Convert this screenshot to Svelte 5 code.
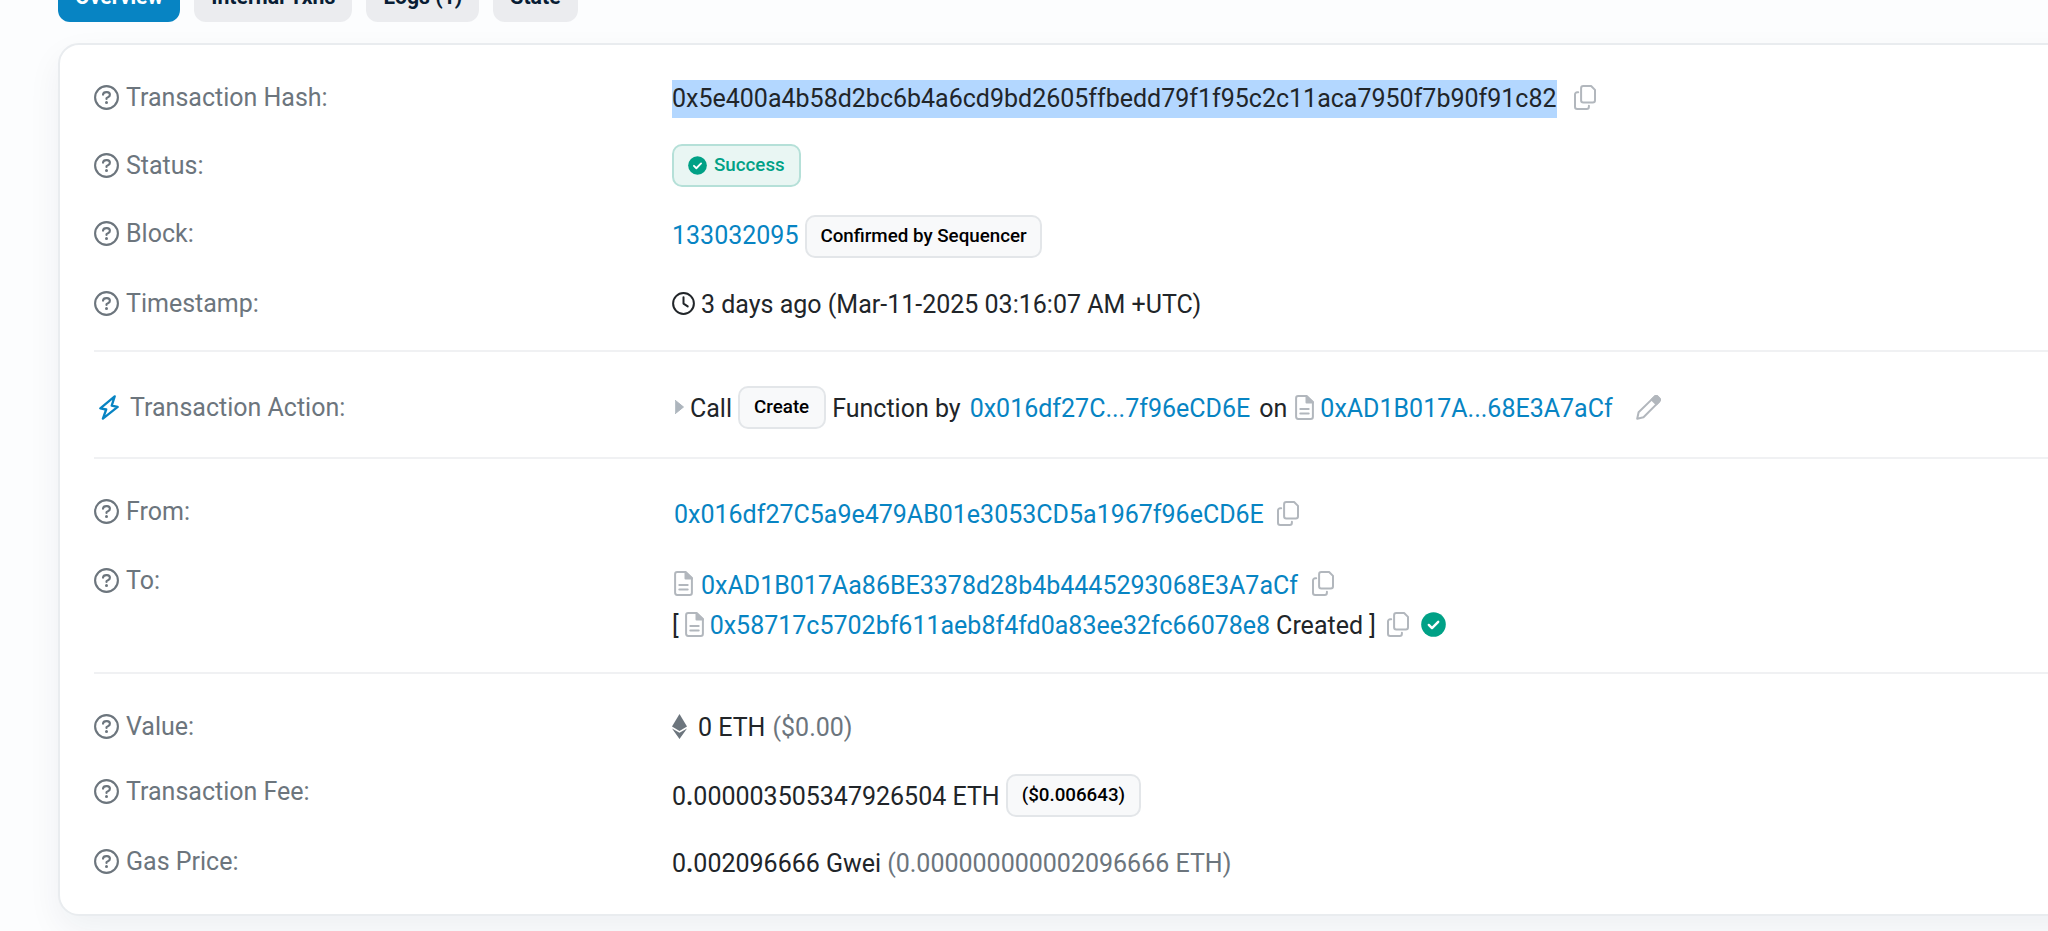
<script>
  const tabs = ["Overview", "Internal Txns", "Logs (1)", "State"];
  let active = $state("Overview");

  const tx = {
    hash: "0x5e400a4b58d2bc6b4a6cd9bd2605ffbedd79f1f95c2c11aca7950f7b90f91c82",
    block: "133032095",
    time: "3 days ago (Mar-11-2025 03:16:07 AM +UTC)",
    fromShort: "0x016df27C...7f96eCD6E",
    toShort: "0xAD1B017A...68E3A7aCf",
    from: "0x016df27C5a9e479AB01e3053CD5a1967f96eCD6E",
    to: "0xAD1B017Aa86BE3378d28b4b4445293068E3A7aCf",
    created: "0x58717c5702bf611aeb8f4fd0a83ee32fc66078e8"
  };
</script>

{#snippet label(text)}
  <div class="label">
    <svg class="help" viewBox="0 0 25 25" width="25" height="25">
      <circle cx="12.5" cy="12.5" r="11.4" />
      <path d="M9 9.600c.2-1.700 1.300-2.500 3.300-2.500h.7c1.800 0 2.900 1.100 2.900 2.600 0 1.200-.7 1.900-1.700 2.500l-1.700 1v.7" />
      <circle class="dot" cx="12.500" cy="17.400" r="1.500" />
    </svg>
    <span>{text}</span>
  </div>
{/snippet}

{#snippet copy()}
  <svg class="copy" viewBox="0 0 22 25" width="22" height="25">
    <path d="M9.300 1h7.800L21 4.900v10.400a2.200 2.200 0 0 1-2.200 2.200H9.300a2.200 2.200 0 0 1-2.200-2.200V3.200A2.200 2.200 0 0 1 9.300 1z" />
    <path d="M4.200 7.300H3.200A2.200 2.200 0 0 0 1 9.500v12.300A2.200 2.200 0 0 0 3.200 24h9.500a2.200 2.200 0 0 0 2.200-2.200v-1" />
  </svg>
{/snippet}

{#snippet doc()}
  <svg class="doc" viewBox="0 0 19 25" width="19" height="25">
    <path d="M3.200 1.100h8.600L17.900 7v14.700a2.200 2.200 0 0 1-2.200 2.200H3.200A2.200 2.200 0 0 1 1.100 21.700V3.300A2.200 2.200 0 0 1 3.200 1.100z" />
    <path class="fold" d="M11.500 1.100V7.400h6.400z" />
    <path d="M5.300 14.100h8.400M5.300 18.500h8.400" />
  </svg>
{/snippet}

{#snippet check(size)}
  <svg class="check" viewBox="0 0 25 25" width={size} height={size}>
    <circle cx="12.500" cy="12.500" r="12.300" />
    <path d="M7.800 12.900l3.200 3.200 6.200-6.300" />
  </svg>
{/snippet}

<div class="page">
  <nav>
    {#each tabs as tab}
      <button class:active={tab === active} onclick={() => (active = tab)}>{tab}</button>
    {/each}
  </nav>

  <div class="card">
    <section class="summary">
      {@render label("Transaction Hash:")}
      <div class="value hash">
        <span class="selected">{tx.hash}</span>
        {@render copy()}
      </div>

      {@render label("Status:")}
      <div class="value">
        <span class="badge success">{@render check(19)}<span>Success</span></span>
      </div>

      {@render label("Block:")}
      <div class="value block">
        <a href="#block">{tx.block}</a>
        <span class="badge low">Confirmed by Sequencer</span>
      </div>

      {@render label("Timestamp:")}
      <div class="value">
        <svg class="clock" viewBox="0 0 23 23" width="23" height="23">
          <circle cx="11.500" cy="11.500" r="10.400" />
          <path d="M11.500 5.300v6.300l4.200 2.800" />
        </svg>
        <span>{tx.time}</span>
      </div>
    </section>

    <section class="action">
      <div class="label">
        <svg class="bolt" viewBox="0 0 20 25" width="20" height="25">
          <path d="M15.700 1.400L1.300 13.300l5.900 1.200-3.300 9.200 14.800-11.800-6-1.200z" />
        </svg>
        <span>Transaction Action:</span>
      </div>
      <div class="value">
        <svg class="caret" viewBox="0 0 9 14" width="9" height="14">
          <path d="M.5.500L8.500 7l-8 6.500z" />
        </svg>
        <span>Call</span>
        <span class="badge create">Create</span>
        <span>Function by</span>
        <a class="fromShort" href="#from">{tx.fromShort}</a>
        <span class="on">on</span>
        {@render doc()}
        <a href="#to">{tx.toShort}</a>
        <svg class="pencil" viewBox="0 0 25 25" width="25" height="25">
          <path d="M1.200 23.800l1.400-6.500L18.400 1.900a2.500 2.500 0 0 1 3.500 0l1.200 1.200a2.500 2.500 0 0 1 0 3.500L7.500 22.200z" />
          <path class="tip" d="M15.600 4.600l2.800-2.700a2.500 2.500 0 0 1 3.500 0l1.200 1.200a2.500 2.500 0 0 1 0 3.500l-2.700 2.700z" />
        </svg>
      </div>
    </section>

    <section class="parties">
      {@render label("From:")}
      <div class="value from">
        <a href="#from">{tx.from}</a>
        {@render copy()}
      </div>

      {@render label("To:")}
      <div class="lines">
        <div class="value to">
          {@render doc()}
          <a href="#to">{tx.to}</a>
          {@render copy()}
        </div>
        <div class="value created">
          <span>[</span>
          {@render doc()}
          <a href="#created">{tx.created}</a>
          <span>Created ]</span>
          {@render copy()}
          {@render check(25)}
        </div>
      </div>
    </section>

    <section class="costs">
      {@render label("Value:")}
      <div class="value eth">
        <svg viewBox="0 0 15 25" width="15" height="25">
          <path d="M7.500 0L15 12.600l-7.500 4.500L0 12.600z" />
          <path d="M0 14.400l7.500 4.400 7.500-4.400L7.500 25z" />
        </svg>
        <span>0 ETH</span>
        <span class="muted">($0.00)</span>
      </div>

      {@render label("Transaction Fee:")}
      <div class="value">
        <span>0<b>.</b>000003505347926504 ETH</span>
        <span class="badge">($0.006643)</span>
      </div>

      {@render label("Gas Price:")}
      <div class="value">
        <span>0<b>.</b>002096666 Gwei</span>
        <span class="muted">(0.000000000002096666 ETH)</span>
      </div>
    </section>
  </div>
</div>

<style>
  :global(body) {
    background: #fcfdfe;
  }
  .page {
    height: 931px;
    overflow: hidden;
    padding-left: 58px;
    box-sizing: border-box;
    font-family: Roboto, "Liberation Sans", sans-serif;
    font-size: 25px;
    color: #212529;
    white-space: nowrap;
  }
  nav {
    display: flex;
    gap: 14px;
    height: 22px;
    align-items: flex-end;
  }
  button {
    height: 46px;
    padding: 0 17px 4px;
    border: 0;
    border-radius: 12px;
    background: #ebecef;
    color: #081d35;
    font: 700 21.25px/42px Roboto, "Liberation Sans", sans-serif;
  }
  button.active {
    background: #0784c3;
    color: #fff;
  }
  .card {
    width: 2060px;
    height: 873px;
    margin-top: 21px;
    box-sizing: border-box;
    padding-left: 34px;
    border: 2px solid #e9ecef;
    border-radius: 21px;
    background: #fff;
    box-shadow: 0 14px 34px rgba(18, 38, 63, 0.06);
  }
  section {
    display: grid;
    grid-template-columns: 578px 1fr;
    align-items: center;
    box-sizing: border-box;
    border-bottom: 2px solid #f0f1f3;
  }
  .summary {
    grid-template-rows: 68px 69px 69px 68px;
    padding: 18px 0 13px;
  }
  .action {
    grid-template-rows: 70px;
    padding: 20px 0 15px;
  }
  .parties {
    grid-template-rows: 60px 82px;
    row-gap: 20px;
    padding: 24px 0 27px;
  }
  .costs {
    grid-template-rows: 52px 66px 47px;
    row-gap: 10px;
    padding-top: 26px;
    border-bottom: 0;
  }
  .label,
  .value {
    display: flex;
    align-items: center;
    line-height: 41px;
  }
  .label {
    gap: 7px;
    color: #6c757d;
  }
  .value {
    gap: 6px;
  }
  .value > a,
  .value > span:not(.badge) {
    margin-top: 2px;
    margin-bottom: -1px;
  }
  .summary .label:nth-child(5) {
    margin-top: -3px;
  }
  .action .label {
    padding-top: 1px;
  }
  .parties .label {
    align-self: start;
    margin-top: -3px;
  }
  .parties .label:first-child {
    margin-top: 8px;
  }
  .lines .value {
    height: 41px;
  }
  .costs .label:nth-child(3) {
    margin-top: -8px;
  }
  a {
    color: #0784c3;
    text-decoration: none;
  }
  svg {
    display: block;
    flex: none;
    fill: none;
    stroke-linejoin: round;
    stroke-linecap: round;
  }
  .help {
    stroke: #6c757d;
    stroke-width: 2.1;
  }
  .help .dot {
    fill: #6c757d;
    stroke: none;
  }
  .copy,
  .doc,
  .pencil {
    stroke: #b2b7bd;
    stroke-width: 2;
  }
  .fold,
  .tip {
    fill: #b2b7bd;
  }
  .check circle {
    fill: #00a186;
  }
  .check path {
    stroke: #fff;
    stroke-width: 2.4;
  }
  .clock {
    stroke: #212529;
    stroke-width: 2;
  }
  .bolt {
    stroke: #0784c3;
    stroke-width: 2.3;
    margin: 0 4px 0 5px;
  }
  .caret {
    fill: #adb5bd;
    stroke: #adb5bd;
    margin-left: 3px;
  }
  .fromShort,
  .on {
    margin-left: 3px;
  }
  .on {
    margin-right: 2px;
  }
  .pencil {
    margin-left: 17px;
  }
  .selected {
    line-height: 38px;
    background: #b3d7ff;
  }
  .value > .selected {
    margin-top: 1px;
  }
  .hash {
    gap: 17px;
  }
  .badge {
    display: flex;
    align-items: center;
    height: 43px;
    box-sizing: border-box;
    padding: 0 14px;
    border: 2px solid #e3e6e9;
    border-radius: 10px;
    background: #f8f9fa;
    color: #000;
    font-size: 18.75px;
    font-weight: 500;
  }
  .create {
    padding-right: 15px;
    margin-top: 1px;
  }
  .success {
    gap: 7px;
    border-color: #b5e0d8;
    background: #e9f6f3;
    color: #00a186;
  }
  .low {
    padding: 0 13px;
    margin-top: 4px;
  }
  .block {
    gap: 7px;
  }
  .block > a {
    margin-top: 0;
  }
  .from {
    gap: 13px;
    padding-left: 2px;
  }
  .to {
    gap: 8px;
    padding-left: 2px;
  }
  .to .copy {
    margin-left: 6px;
  }
  .created .copy {
    margin-left: 5px;
  }
  .created .check {
    margin-left: 6px;
  }
  .created > a,
  .created > span:not(.badge) {
    margin-top: 0;
  }
  .eth {
    gap: 11px;
  }
  .eth .muted {
    margin-left: -4px;
  }
  .eth path {
    fill: #6c757d;
  }
  .muted {
    color: #6c757d;
  }
</style>
